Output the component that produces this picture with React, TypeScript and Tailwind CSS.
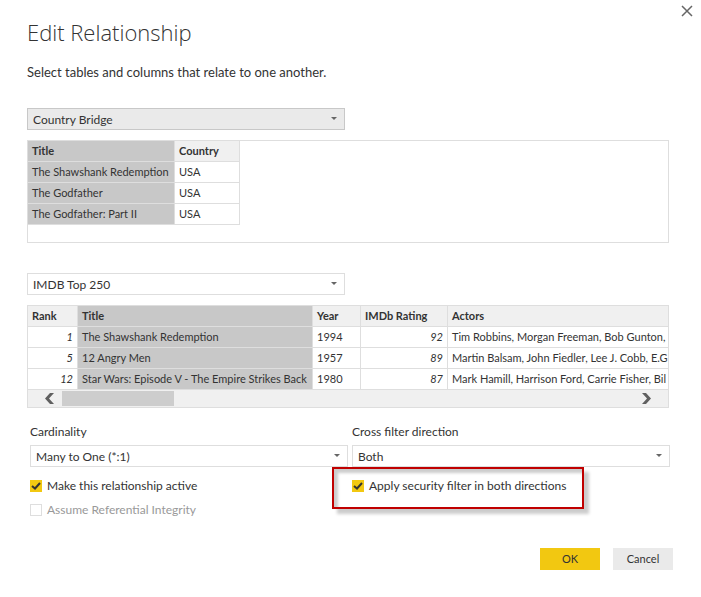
import React from "react";

type Column = {
  name: string;
  width?: string;
  selected?: boolean;
  numeric?: boolean;
};

const bridgeColumns: Column[] = [
  { name: "Title", width: "w-[147px]", selected: true },
  { name: "Country", width: "w-[65px]" },
];

const bridgeRows = [
  ["The Shawshank Redemption", "USA"],
  ["The Godfather", "USA"],
  ["The Godfather: Part II", "USA"],
];

const imdbColumns: Column[] = [
  { name: "Rank", width: "w-[50px]", numeric: true },
  { name: "Title", width: "w-[235px]", selected: true },
  { name: "Year", width: "w-[48px]" },
  { name: "IMDb Rating", width: "w-[87px]", numeric: true },
  { name: "Actors" },
];

const imdbRows = [
  ["1", "The Shawshank Redemption", "1994", "92", "Tim Robbins, Morgan Freeman, Bob Gunton,"],
  ["5", "12 Angry Men", "1957", "89", "Martin Balsam, John Fiedler, Lee J. Cobb, E.G"],
  ["12", "Star Wars: Episode V - The Empire Strikes Back", "1980", "87", "Mark Hamill, Harrison Ford, Carrie Fisher, Bil"],
];

const PreviewTable: React.FC<{
  label: string;
  columns: Column[];
  rows: string[][];
  className: string;
}> = ({ label, columns, rows, className }) => (
  <table
    aria-label={label}
    className={`table-fixed border-separate border-spacing-0 text-[11px] leading-5 ${className}`}
  >
    <thead>
      <tr>
        {columns.map((col) => (
          <th
            key={col.name}
            className={`h-[21px] overflow-hidden border-b border-[#dedede] p-0 pl-1 text-left font-bold whitespace-nowrap ${col.width ? `${col.width} border-r` : ""} ${col.selected ? "bg-[#c8c8c8]" : "bg-[#f0f0f0]"}`}
          >
            {col.name}
          </th>
        ))}
      </tr>
    </thead>
    <tbody>
      {rows.map((row) => (
        <tr key={row[0]}>
          {row.map((value, i) => (
            <td
              key={columns[i].name}
              className={`h-[21px] overflow-hidden border-b border-[#dedede] p-0 pl-1 whitespace-nowrap ${columns[i].width ? "border-r" : ""} ${columns[i].selected ? "bg-[#c8c8c8]" : ""} ${columns[i].numeric ? "pr-1 text-right italic" : ""}`}
            >
              {value}
            </td>
          ))}
        </tr>
      ))}
    </tbody>
  </table>
);

const Dropdown: React.FC<{
  id: string;
  label?: string;
  options: string[];
  className?: string;
}> = ({ id, label, options, className = "border-[#dedede] bg-white" }) => (
  <div className="relative">
    <select
      id={id}
      aria-label={label}
      className={`block h-[22px] w-full appearance-none rounded-none border pt-px pr-6 pl-[5px] text-xs leading-5 ${className}`}
    >
      {options.map((option) => (
        <option key={option}>{option}</option>
      ))}
    </select>
    <svg
      viewBox="0 0 6 3"
      className="pointer-events-none absolute top-[9px] right-2 h-[3px] w-[6px] fill-[#666666]"
    >
      <path d="M0 0h6L3 3z" />
    </svg>
  </div>
);

const Checkbox: React.FC<{
  label: string;
  checked?: boolean;
  disabled?: boolean;
}> = ({ label, checked, disabled }) => (
  <label
    className={`flex h-6 w-fit items-center gap-[5px] text-xs ${disabled ? "text-[#999999]" : ""}`}
  >
    <span className="grid">
      <input
        type="checkbox"
        defaultChecked={checked}
        disabled={disabled}
        className="peer col-start-1 row-start-1 size-3 appearance-none border border-[#dedede] bg-white checked:border-[#f2c811] checked:bg-[#f2c811]"
      />
      <svg
        viewBox="0 0 12 12"
        className="pointer-events-none invisible col-start-1 row-start-1 size-3 fill-none stroke-[#333333] stroke-2 peer-checked:visible"
      >
        <path d="M2 6l3 2.500 5-5.500" />
      </svg>
    </span>
    {label}
  </label>
);

const App: React.FC = () => {
  return (
    <main className="min-h-screen bg-white pb-[27px] font-['Lato','Open_Sans',sans-serif] text-[#333333]">
      {/* Header */}
      <header className="flex justify-between pr-2 pl-[27px]">
        <div>
          <h1 className="pt-4 font-['Open_Sans',sans-serif] text-[22px] leading-8 font-light">
            Edit Relationship
          </h1>
          <p className="pt-4 text-[13px] leading-4">
            Select tables and columns that relate to one another.
          </p>
        </div>
        <button type="button" aria-label="Close" className="h-fit pt-[5px]">
          <svg viewBox="0 0 12 12" className="size-3 fill-none stroke-[#666666] stroke-[1.5]">
            <path d="M1 1l10 10M11 1L1 11" />
          </svg>
        </button>
      </header>

      {/* First table */}
      <section className="mt-7 pr-8 pl-[27px]">
        <div className="w-[318px] max-w-full">
          <Dropdown
            id="first-table"
            label="First table"
            options={["Country Bridge", "IMDB Top 250"]}
            className="border-[#c8c8c8] bg-[#eaeaea]"
          />
        </div>
        <div className="mt-2.5 overflow-hidden border border-[#dedede] pb-[17px]">
          <PreviewTable
            label="Country Bridge"
            columns={bridgeColumns}
            rows={bridgeRows}
            className="w-[212px]"
          />
        </div>
      </section>

      {/* Second table */}
      <section className="mt-[30px] pr-8 pl-[27px]">
        <div className="w-[318px] max-w-full">
          <Dropdown
            id="second-table"
            label="Second table"
            options={["IMDB Top 250", "Country Bridge"]}
          />
        </div>
        <div className="mt-2.5 border border-[#dedede]">
          <div className="overflow-hidden">
            <PreviewTable
              label="IMDB Top 250"
              columns={imdbColumns}
              rows={imdbRows}
              className="w-full"
            />
          </div>
          <div className="flex h-[17px] items-center bg-[#f0f0f0] px-[17px]">
            <button type="button" aria-label="Scroll left">
              <svg viewBox="0 0 9 11" className="h-[11px] w-[9px] fill-[#606060]">
                <path d="M5 0h4L4 5.500 9 11H5L0 5.500z" />
              </svg>
            </button>
            <div className="mx-2 flex-1">
              <div className="h-[15px] w-[112px] bg-[#cdcdcd]" />
            </div>
            <button type="button" aria-label="Scroll right">
              <svg viewBox="0 0 9 11" className="h-[11px] w-[9px] fill-[#606060]">
                <path d="M4 0H0l5 5.500L0 11h4l5-5.500z" />
              </svg>
            </button>
          </div>
        </div>
      </section>

      {/* Relationship options */}
      <section className="mt-4 grid grid-cols-2 gap-1 pr-[31px] pl-[30px]">
        <div>
          <label htmlFor="cardinality" className="block pb-[5px] text-xs leading-4">
            Cardinality
          </label>
          <Dropdown
            id="cardinality"
            options={["Many to One (*:1)", "One to One (1:1)", "One to Many (1:*)"]}
          />
          <div className="pt-[7px]">
            <Checkbox label="Make this relationship active" checked />
            <Checkbox label="Assume Referential Integrity" disabled />
          </div>
        </div>
        <div>
          <label htmlFor="direction" className="block pb-[5px] text-xs leading-4">
            Cross filter direction
          </label>
          <Dropdown id="direction" options={["Both", "Single"]} />
          <div className="relative mt-[7px] w-fit">
            <Checkbox label="Apply security filter in both directions" checked />
            {/* callout frame */}
            <div className="pointer-events-none absolute -top-[7px] -right-[18px] -bottom-[11px] -left-5 border-2 border-[#c00000] shadow-[5px_5px_3px_rgba(0,0,0,0.2),inset_4px_4px_3px_rgba(0,0,0,0.2)]" />
          </div>
        </div>
      </section>

      {/* Footer */}
      <footer className="mt-[26px] flex justify-end gap-[13px] pr-7 text-[11px]">
        <button type="button" className="h-[22px] w-[60px] bg-[#f2c811]">
          OK
        </button>
        <button type="button" className="h-[22px] w-[60px] bg-[#eaeaea]">
          Cancel
        </button>
      </footer>
    </main>
  );
};

export default App;
